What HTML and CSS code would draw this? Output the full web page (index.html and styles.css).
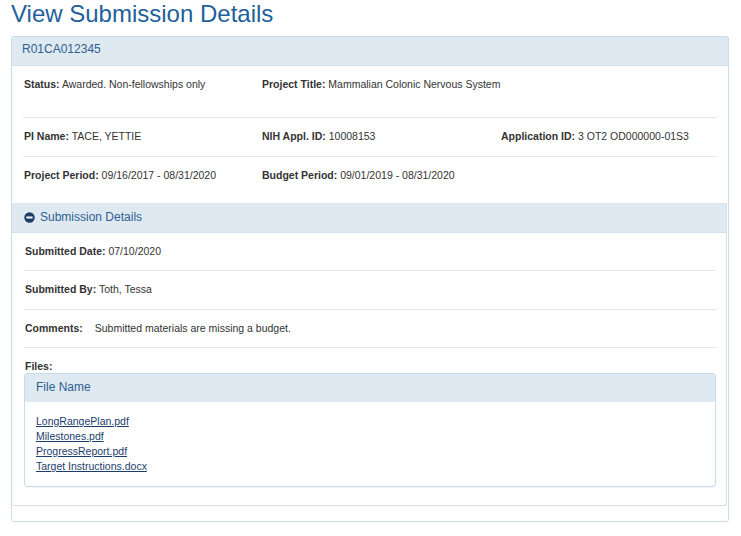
FILE: index.html
```html
<!DOCTYPE html>
<html>
<head>
<meta charset="utf-8">
<title>View Submission Details</title>
<link rel="stylesheet" href="styles.css">
</head>
<body>
<div class="page">
  <h1 class="title">View Submission Details</h1>
  <div class="panel">
    <div class="panel-heading">R01CA012345</div>
    <div class="summary">
      <div class="row first">
        <div class="cell"><b>Status:</b> Awarded. Non-fellowships only</div>
        <div class="cell"><b>Project Title:</b> Mammalian Colonic Nervous System</div>
        <div class="cell"></div>
      </div>
      <div class="row">
        <div class="cell"><b>PI Name:</b> TACE, YETTIE</div>
        <div class="cell"><b>NIH Appl. ID:</b> 10008153</div>
        <div class="cell"><b>Application ID:</b> 3 OT2 OD000000-01S3</div>
      </div>
      <div class="row last">
        <div class="cell"><b>Project Period:</b> 09/16/2017 - 08/31/2020</div>
        <div class="cell"><b>Budget Period:</b> 09/01/2019 - 08/31/2020</div>
        <div class="cell"></div>
      </div>
    </div>
    <div class="sub-panel">
      <div class="sub-heading">
        <svg class="minus-icon" width="11" height="11" viewBox="0 0 11 11"><circle cx="5.5" cy="5.5" r="5.2" fill="#1e3d66"/><rect x="2.4" y="4.5" width="6.2" height="2" fill="#fff"/></svg>
        <span>Submission Details</span>
      </div>
      <div class="sub-body">
        <div class="line first-line"><b>Submitted Date:</b> 07/10/2020</div>
        <div class="line"><b>Submitted By:</b> Toth, Tessa</div>
        <div class="line"><b>Comments:</b><span class="comment">Submitted materials are missing a budget.</span></div>
        <div class="files-label"><b>Files:</b></div>
        <div class="files">
          <div class="files-heading">File Name</div>
          <div class="files-body">
            <a href="#">LongRangePlan.pdf</a>
            <a href="#">Milestones.pdf</a>
            <a href="#">ProgressReport.pdf</a>
            <a href="#">Target Instructions.docx</a>
          </div>
        </div>
      </div>
    </div>
  </div>
</div>
</body>
</html>
```
FILE: styles.css
```css
html, body {
  margin: 0;
  padding: 0;
  background: #ffffff;
}
body {
  font-family: "Liberation Sans", Arial, sans-serif;
  color: #333333;
}
.page {
  padding: 0 12px 0 11px;
}
.title {
  margin: 0 0 8px 0;
  font-size: 24px;
  line-height: 28px;
  font-weight: normal;
  color: #22609c;
}
.panel {
  border: 1px solid #c6dde8;
  border-radius: 3px;
}
.panel-heading {
  background: #dee9f2;
  border-bottom: 1px solid #d2e2ec;
  color: #2f5f8f;
  font-size: 12px;
  line-height: 14px;
  padding: 5px 10px 9px;
}
.summary {
  margin: 0 12px 0 11px;
  font-size: 10.5px;
}
.row {
  display: grid;
  grid-template-columns: 238px 239px 1fr;
  line-height: 13px;
  padding: 12px 0 13px 1px;
  border-bottom: 1px solid #e6e6e6;
}
.row.first {
  padding-bottom: 26px;
}
.row.last {
  border-bottom: none;
  padding-bottom: 13px;
}
.cell {
  white-space: nowrap;
}
.sub-panel {
  margin: 8px 1px 15px 0;
  border: 1px solid #dddddd;
  border-top-color: #dee9f2;
  border-left: none;
  border-radius: 0 0 3px 3px;
}
.sub-heading {
  background: #dee9f2;
  border-bottom: 1px solid #d2e2ec;
  height: 28px;
  display: flex;
  align-items: center;
  gap: 5px;
  padding: 0 0 0 12px;
  color: #2f5f8f;
  font-size: 12px;
}
.sub-heading span {
  position: relative;
  top: -1px;
}
.minus-icon {
  display: block;
  position: relative;
  top: -1px;
}
.sub-body {
  padding: 0 10px 18px 12px;
  font-size: 10.5px;
}
.line {
  line-height: 13px;
  padding: 12px 0 12.5px 1px;
  border-bottom: 1px solid #e6e6e6;
}
.line.first-line {
  padding-top: 11.5px;
}
.comment {
  margin-left: 12px;
}
.files-label {
  line-height: 13px;
  padding: 12px 0 0 1px;
}
.files {
  border: 1px solid #c6dde8;
  border-radius: 3px;
  box-shadow: 0 1px 1px rgba(0,0,0,0.04);
}
.files-heading {
  background: #dee9f2;
  color: #2f5f8f;
  font-size: 12px;
  line-height: 14px;
  padding: 6px 11px 8px;
}
.files-body {
  padding: 12px 11px 12px;
  display: flex;
  flex-direction: column;
  align-items: flex-start;
}
.files-body a {
  color: #1b3d6d;
  text-decoration: underline;
  line-height: 15px;
  font-size: 10.5px;
}
```
